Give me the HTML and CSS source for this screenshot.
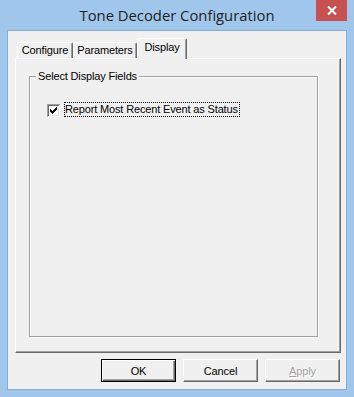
FILE: index.html
```html
<!DOCTYPE html>
<html>
<head>
<meta charset="utf-8">
<link rel="stylesheet" href="styles.css">
</head>
<body>
<div class="window">
  <div class="titlebar">
    <span></span>
    <span class="title">Tone Decoder Configuration</span>
    <div class="close">
      <svg width="10" height="9" viewBox="0 0 10 9"><path d="M1 0.5 L9 8.5 M9 0.5 L1 8.5" stroke="#fff" stroke-width="2" fill="none"/></svg>
    </div>
  </div>
  <div class="client">
    <div class="tabs">
      <div class="tab tab-configure">Configure</div>
      <div class="tab tab-parameters">Parameters</div>
      <div class="tab tab-display active">Display</div>
    </div>
    <div class="panel">
      <div class="group">
        <div class="legend">Select Display Fields</div>
        <div class="check-row">
          <span class="checkbox">
            <svg width="7" height="7" viewBox="0 0 7 7"><path d="M0.5 2.5 L2.5 4.5 L6.5 0.5 M0.5 3.5 L2.5 5.5 L6.5 1.5 M0.5 4.5 L2.5 6.5 L6.5 2.5" stroke="#000" stroke-width="1" fill="none" shape-rendering="crispEdges"/></svg>
          </span>
          <span class="focus">Report Most Recent Event as Status</span>
        </div>
      </div>
    </div>
    <div class="buttons">
      <div class="btn default">OK</div>
      <div class="btn">Cancel</div>
      <div class="btn disabled"><u>A</u>pply</div>
    </div>
  </div>
</div>
</body>
</html>
```
FILE: styles.css
```css
html, body {
  margin: 0;
  padding: 0;
}
body {
  background: #a0c7eb;
  font-family: "Liberation Sans", Arial, sans-serif;
  font-size: 11px;
  letter-spacing: -0.15px;
  color: #000;
}
.window {
  width: 354px;
  height: 397px;
  background: #a0c7eb;
  display: flex;
  flex-direction: column;
}
.titlebar {
  height: 31px;
  display: grid;
  grid-template-columns: 1fr auto 1fr;
  align-items: start;
}
.title {
  font-family: "Open Sans", "Noto Sans", sans-serif;
  font-size: 14.8px;
  letter-spacing: 0;
  line-height: 31px;
  color: #1e1e1e;
  white-space: nowrap;
}
.close {
  justify-self: end;
  margin-right: 7px;
  width: 31px;
  height: 21px;
  background: #c75050;
  display: flex;
  align-items: center;
  justify-content: center;
}
.client {
  margin: 0 8px;
  width: 338px;
  height: 358px;
  box-sizing: border-box;
  background: #f0f0f0;
  box-shadow: 0 0 0 1px #86acd4;
  padding: 7px 5px 0 7px;
  display: flex;
  flex-direction: column;
}
.tabs {
  display: flex;
  align-items: flex-end;
  height: 20px;
  padding-left: 2px;
}
.tab {
  box-sizing: border-box;
  height: 16px;
  border-top: 1px solid #fff;
  border-left: 1px solid #fff;
  border-right: 1px solid #696969;
  box-shadow: inset -1px 0 0 #a0a0a0;
  border-radius: 2px 2px 0 0;
  background: #f0f0f0;
  display: flex;
  align-items: center;
  justify-content: center;
  line-height: 13px;
  white-space: nowrap;
}
.tab-configure { width: 56px; }
.tab-parameters { width: 64px; }
.tab-display { width: 50px; }
.tab.active {
  height: 21px;
  margin-bottom: -1px;
  position: relative;
  z-index: 1;
  padding-bottom: 3px;
}
.panel {
  box-sizing: border-box;
  width: 326px;
  height: 295px;
  border-top: 1px solid #fff;
  border-left: 1px solid #fff;
  border-right: 1px solid #696969;
  border-bottom: 1px solid #696969;
  box-shadow: inset -1px -1px 0 #a0a0a0;
  padding: 17px 0 0 13px;
}
.group {
  box-sizing: border-box;
  width: 289px;
  height: 261px;
  border: 1px solid #a0a0a0;
  box-shadow: inset 1px 1px 0 #fff, 1px 1px 0 #fff;
}
.legend {
  width: fit-content;
  margin: -7px 0 0 6px;
  padding: 0 2px;
  line-height: 13px;
  background: #f0f0f0;
  position: relative;
}
.check-row {
  display: flex;
  align-items: center;
  margin: 19px 0 0 17px;
  height: 15px;
}
.checkbox {
  box-sizing: border-box;
  width: 13px;
  height: 13px;
  background: #fff;
  box-shadow: inset 1px 1px 0 #a0a0a0, inset -1px -1px 0 #fff, inset 2px 2px 0 #696969, inset -2px -2px 0 #e3e3e3;
  display: flex;
  align-items: center;
  justify-content: center;
  margin-top: 1px;
}
.focus {
  margin-left: 4px;
  border: 1px dotted #000;
  padding: 0 1px 0 0;
  line-height: 13px;
  white-space: nowrap;
}
.buttons {
  display: flex;
  justify-content: flex-end;
  gap: 7px;
  margin-top: 6px;
  margin-right: 1px;
}
.btn {
  box-sizing: border-box;
  width: 75px;
  height: 23px;
  display: flex;
  align-items: center;
  justify-content: center;
  background: #f0f0f0;
  border-top: 1px solid #fff;
  border-left: 1px solid #fff;
  border-right: 1px solid #696969;
  border-bottom: 1px solid #696969;
  box-shadow: inset -1px -1px 0 #a0a0a0;
}
.btn.default {
  border: 1px solid #000;
  box-shadow: inset 1px 1px 0 #fff, inset -1px -1px 0 #696969, inset -2px -2px 0 #a0a0a0;
}
.btn.disabled {
  color: #a0a0a0;
  text-shadow: 1px 1px 0 #fff;
}
.btn u {
  text-decoration: underline;
}
```
